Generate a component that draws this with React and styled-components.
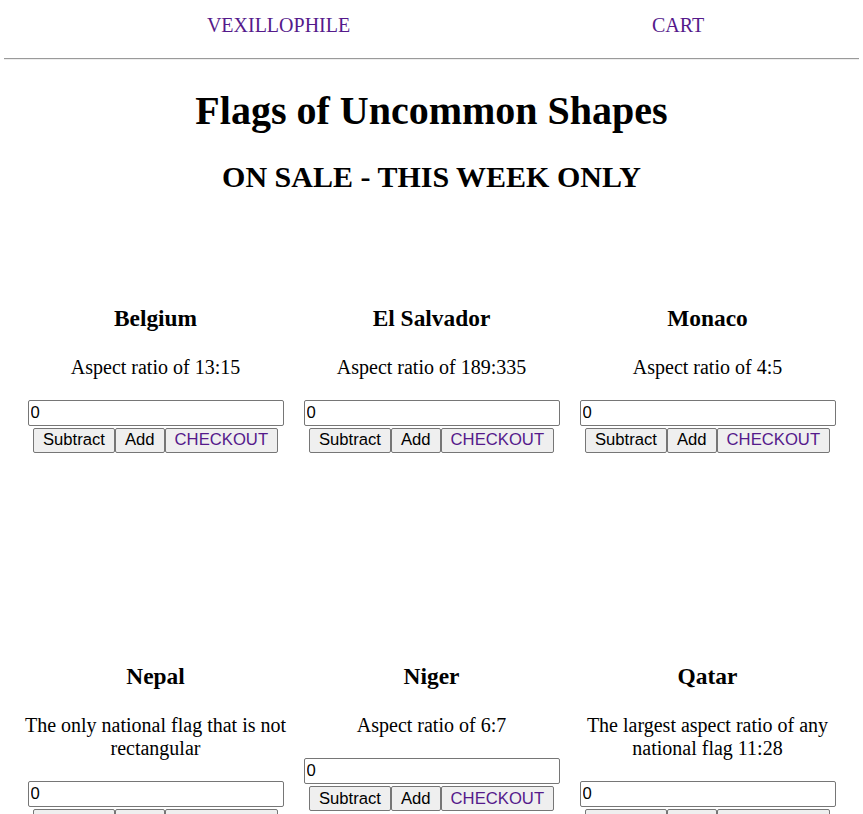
import React, { useState } from "react";
import styled, { createGlobalStyle } from "styled-components";

const GlobalStyle = createGlobalStyle`
  html, body {
    margin: 0;
    padding: 0;
    background: #ffffff;
  }
  body {
    font-family: "Liberation Serif", "Times New Roman", serif;
    font-size: 20px;
    color: #000000;
  }
`;

const Page = styled.div`
  padding: 0 8px;
`;

const NavList = styled.ul`
  display: flex;
  justify-content: space-around;
  list-style: none;
  margin: 0 0 21.5px 0;
  padding: 13.5px 0 0 48px;
  line-height: 23px;
`;

const NavLink = styled.a`
  color: #551a8b;
  text-decoration: none;
  font-size: 20px;
`;

const Rule = styled.hr`
  margin: 0 -4px;
  height: 0;
  border: none;
  border-top: 1px solid #9a9a9a;
  border-bottom: 1px solid #eeeeee;
`;

const Title = styled.h1`
  text-align: center;
  font-size: 40px;
  line-height: 46px;
  margin: 28px 0 0;
`;

const Subtitle = styled.h2`
  text-align: center;
  font-size: 30px;
  line-height: 34px;
  margin: 26px 0 0;
`;

const Grid = styled.div`
  display: grid;
  grid-template-columns: repeat(3, 276px);
  justify-content: center;
  align-items: start;
  row-gap: 120px;
  margin-top: 20px;
`;

const Card = styled.div`
  display: flex;
  flex-direction: column;
  align-items: center;
  text-align: center;
`;

const FlagSpace = styled.div`
  height: 90.5px;
`;

const Name = styled.h3`
  font-size: 23.4px;
  line-height: 27px;
  margin: 0;
`;

const Blurb = styled.p`
  margin: 24px 0 21.5px;
  line-height: 22.5px;
`;

const Qty = styled.input`
  box-sizing: border-box;
  width: 256px;
  height: 26px;
  font-family: "Liberation Sans", Arial, sans-serif;
  font-size: 16.67px;
  padding: 1px 2px;
  border: 1px solid #767676;
  border-radius: 2px;
  background: #ffffff;
  color: #000000;
`;

const ButtonRow = styled.div`
  display: flex;
  margin-top: 2px;
`;

const Btn = styled.button`
  box-sizing: border-box;
  height: 25px;
  font-family: "Liberation Sans", Arial, sans-serif;
  font-size: 16.67px;
  padding: 0 9px;
  background: #efefef;
  border: 1px solid #767676;
  border-radius: 2px;
  color: ${(p) => (p.$link ? "#551a8b" : "#000000")};
`;

const flags = [
  { name: "Belgium", text: "Aspect ratio of 13:15" },
  { name: "El Salvador", text: "Aspect ratio of 189:335" },
  { name: "Monaco", text: "Aspect ratio of 4:5" },
  { name: "Nepal", text: "The only national flag that is not rectangular" },
  { name: "Niger", text: "Aspect ratio of 6:7" },
  { name: "Qatar", text: "The largest aspect ratio of any national flag 11:28" },
];

function FlagCard({ flag }) {
  const [count, setCount] = useState(0);
  return (
    <Card>
      <FlagSpace />
      <Name>{flag.name}</Name>
      <Blurb>{flag.text}</Blurb>
      <Qty
        type="text"
        value={count}
        onChange={(e) => setCount(Number(e.target.value) || 0)}
      />
      <ButtonRow>
        <Btn onClick={() => setCount(Math.max(0, count - 1))}>Subtract</Btn>
        <Btn onClick={() => setCount(count + 1)}>Add</Btn>
        <Btn $link>CHECKOUT</Btn>
      </ButtonRow>
    </Card>
  );
}

export default function App() {
  return (
    <Page>
      <GlobalStyle />
      <nav>
        <NavList>
          <li>
            <NavLink href="#">VEXILLOPHILE</NavLink>
          </li>
          <li>
            <NavLink href="#">CART</NavLink>
          </li>
        </NavList>
      </nav>
      <Rule />
      <Title>Flags of Uncommon Shapes</Title>
      <Subtitle>ON SALE - THIS WEEK ONLY</Subtitle>
      <Grid>
        {flags.map((f) => (
          <FlagCard key={f.name} flag={f} />
        ))}
      </Grid>
    </Page>
  );
}
